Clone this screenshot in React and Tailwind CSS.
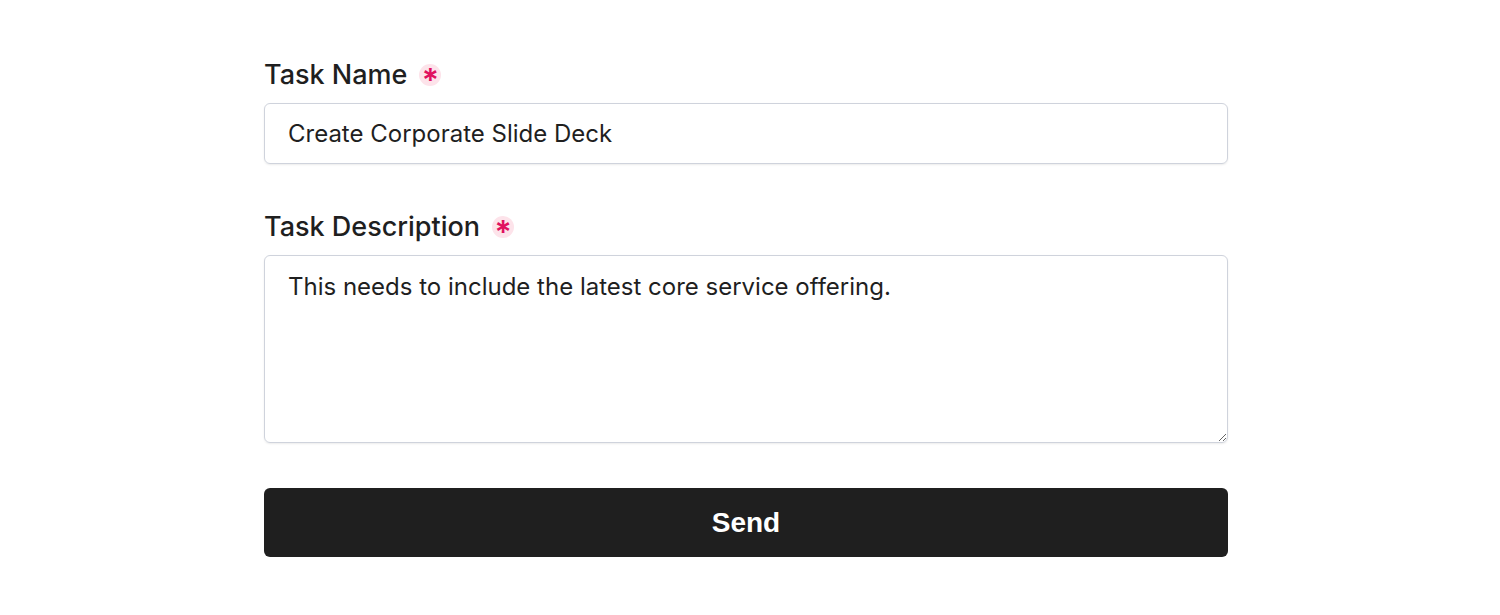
export default function App() {
  return (
    <div className="w-[1500px] h-[615px] bg-white flex pl-[264px]" style={{ fontFamily: "Inter, 'Noto Sans', sans-serif" }}>
      <div className="w-[964px] pt-[57px] flex flex-col">
        <label className="flex items-center gap-[12px] text-[27px] leading-[36px] font-medium text-[#1f1f1f]">
          Task Name
          <span className="w-[22px] h-[22px] rounded-full bg-[#fde3ea] flex items-center justify-center text-[#e0115f] text-[32px] font-semibold leading-none pt-[12px]">*</span>
        </label>
        <div className="mt-[10px] h-[61px] rounded-[6px] border border-[#cfd3dc] shadow-[0_1px_2px_rgba(0,0,0,0.08)] flex items-center px-[23px] text-[24px] text-[#1f1f1f]">
          Create Corporate Slide Deck
        </div>
        <label className="mt-[45px] flex items-center gap-[12px] text-[27px] leading-[36px] font-medium text-[#1f1f1f]">
          Task Description
          <span className="w-[22px] h-[22px] rounded-full bg-[#fde3ea] flex items-center justify-center text-[#e0115f] text-[32px] font-semibold leading-none pt-[12px]">*</span>
        </label>
        <textarea
          className="mt-[10px] h-[188px] rounded-[6px] border border-[#cfd3dc] shadow-[0_1px_2px_rgba(0,0,0,0.08)] px-[23px] py-[13px] text-[24px] text-[#1f1f1f] outline-none resize-y"
          defaultValue="This needs to include the latest core service offering."
        />
        <button className="mt-[45px] h-[69px] rounded-[6px] bg-[#1f1f1f] text-white text-[28px] font-bold" style={{ fontFamily: "'Liberation Sans', Arial, sans-serif" }}>
          Send
        </button>
      </div>
    </div>
  );
}
